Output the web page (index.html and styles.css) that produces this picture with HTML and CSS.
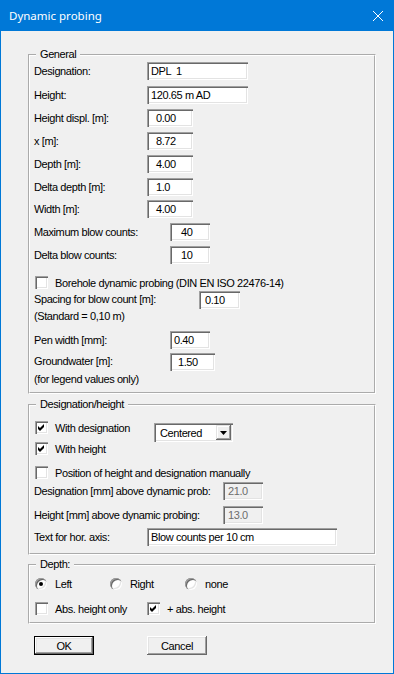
FILE: index.html
```html
<!DOCTYPE html>
<html lang="en">
<head>
  <meta charset="UTF-8" />
  <title>Dynamic probing</title>
  <link rel="stylesheet" href="styles.css">
</head>
<body>
  <div class="window">
    <div class="titlebar">
      <span class="title">Dynamic probing</span>
      <svg class="close" width="10" height="10" viewBox="0 0 10 10"><path d="M0 0 L10 10 M10 0 L0 10" stroke="#fff" stroke-width="1" fill="none"/></svg>
    </div>

    <div class="dialog">
      <div class="group general">
        <div class="caption">General</div>
        <div class="row"><span class="lbl l113">Designation:</span><span class="edit w101">DPL  1</span></div>
        <div class="row mt6"><span class="lbl l113">Height:</span><span class="edit w101">120.65 m AD</span></div>
        <div class="row"><span class="lbl l113">Height displ. [m]:</span><span class="edit w46 pl9">0.00</span></div>
        <div class="row"><span class="lbl l113">x [m]:</span><span class="edit w46 pl9">8.72</span></div>
        <div class="row"><span class="lbl l113">Depth [m]:</span><span class="edit w46 pl9">4.00</span></div>
        <div class="row"><span class="lbl l113">Delta depth [m]:</span><span class="edit w46 pl9">1.0</span></div>
        <div class="row mt4"><span class="lbl l113">Width [m]:</span><span class="edit w46 pl9">4.00</span></div>
        <div class="row"><span class="lbl l136">Maximum blow counts:</span><span class="edit w40 pl11">40</span></div>
        <div class="row"><span class="lbl l136">Delta blow counts:</span><span class="edit w40 pl11">10</span></div>
        <div class="check-row mt12"><span class="check"></span><span>Borehole dynamic probing (DIN EN ISO 22476-14)</span></div>
        <div class="row tall mt2"><span class="lbl l165 two">Spacing for blow count [m]:<br>(Standard = 0,10 m)</span><span class="edit w41 pl6">0.10</span></div>
        <div class="row mt6"><span class="lbl l136">Pen width [mm]:</span><span class="edit w40">0.40</span></div>
        <div class="row tall mt4"><span class="lbl l136 two gw">Groundwater [m]:<br>(for legend values only)</span><span class="edit w45 pl8">1.50</span></div>
      </div>

      <div class="group desig">
        <div class="caption">Designation/height</div>
        <div class="combo-row">
          <div class="checks">
            <div class="check-row"><span class="check"><svg width="13" height="13" viewBox="0 0 13 13"><path d="M3 5 L5 7 L9 3 L9 6 L5 10 L3 8 Z" fill="#000"/></svg></span><span>With designation</span></div>
            <div class="check-row mt8"><span class="check"><svg width="13" height="13" viewBox="0 0 13 13"><path d="M3 5 L5 7 L9 3 L9 6 L5 10 L3 8 Z" fill="#000"/></svg></span><span>With height</span></div>
          </div>
          <div class="combo">
            <span class="combo-text">Centered</span>
            <span class="combo-btn"><svg width="7" height="4" viewBox="0 0 7 4"><path d="M0 0 L7 0 L3.5 4 Z" fill="#000"/></svg></span>
          </div>
        </div>
        <div class="check-row mt11"><span class="check"></span><span>Position of height and designation manually</span></div>
        <div class="row mt3"><span class="lbl l189">Designation [mm] above dynamic prob:</span><span class="edit w40 pl5 disabled">21.0</span></div>
        <div class="row mt6"><span class="lbl l189">Height [mm] above dynamic probing:</span><span class="edit w40 pl5 disabled">13.0</span></div>
        <div class="row mt4"><span class="lbl l113">Text for hor. axis:</span><span class="edit w190">Blow counts per 10 cm</span></div>
      </div>

      <div class="group depth">
        <div class="caption">Depth:</div>
        <div class="opt-row mt5">
          <div class="opt w75"><span class="radio on"></span><span>Left</span></div>
          <div class="opt w75"><span class="radio"></span><span>Right</span></div>
          <div class="opt"><span class="radio"></span><span>none</span></div>
        </div>
        <div class="opt-row mt12">
          <div class="opt w112"><span class="check"></span><span>Abs. height only</span></div>
          <div class="opt"><span class="check"><svg width="13" height="13" viewBox="0 0 13 13"><path d="M3 5 L5 7 L9 3 L9 6 L5 10 L3 8 Z" fill="#000"/></svg></span><span>+ abs. height</span></div>
        </div>
      </div>

      <div class="buttons">
        <div class="btn default">OK</div>
        <div class="btn">Cancel</div>
      </div>
    </div>
  </div>
</body>
</html>
```

FILE: styles.css
```css
body {
  margin: 0;
  background: #f0f0f0;
  font-family: "Liberation Sans", Arial, sans-serif;
  font-size: 11px;
  letter-spacing: -0.4px;
  color: #000;
}

.window {
  width: 394px;
  height: 674px;
  box-sizing: border-box;
  border: 1px solid #0078d7;
  border-top: 0;
}

.titlebar {
  height: 31px;
  background: #0078d7;
  color: #fff;
  display: flex;
  align-items: center;
  justify-content: space-between;
  padding: 0 10px 0 8px;
  font-family: "Noto Sans", sans-serif;
  font-size: 11.5px;
  letter-spacing: 0;
}

.close {
  display: block;
}

.dialog {
  padding-top: 23px;
  white-space: nowrap;
}

/* etched group box */
.group {
  margin: 0 17px 0 27px;
  border: 2px groove #fff;
  padding: 0 4px 4px 4px;
}

.caption {
  width: fit-content;
  margin: -9px 0 0 2px;
  padding: 0 4px;
  background: #f0f0f0;
  line-height: 15px;
}

.desig {
  margin-top: 10px;
  padding-bottom: 7px;
}

.depth {
  margin-top: 9px;
  padding-bottom: 7px;
}

.row {
  display: flex;
  align-items: center;
  height: 18px;
  margin-top: 5px;
}

.caption + .row {
  margin-top: 0;
}

.row.tall {
  height: auto;
  align-items: flex-start;
}

.lbl {
  flex: none;
}

.l113 { width: 113px; }
.l136 { width: 136px; }
.l165 { width: 165px; }
.l189 { width: 189px; }

.two {
  line-height: 17px;
}

.two.gw {
  line-height: 18px;
  margin-top: -1px;
}

.edit {
  flex: none;
  height: 18px;
  line-height: 18px;
  box-sizing: border-box;
  padding-left: 4px;
  background: #fff;
  white-space: pre;
  box-shadow: inset 1px 1px 0 #a0a0a0, inset 2px 2px 0 #696969, inset -1px -1px 0 #fff, inset -2px -2px 0 #e3e3e3;
}

.edit.disabled {
  background: #f0f0f0;
  color: #6d6d6d;
}

.w40 { width: 40px; }
.w41 { width: 41px; }
.w45 { width: 45px; }
.w46 { width: 46px; }
.w101 { width: 101px; }
.w190 { width: 190px; }

.pl5 { padding-left: 5px; }
.pl6 { padding-left: 6px; }
.pl8 { padding-left: 8px; }
.pl9 { padding-left: 9px; }
.pl11 { padding-left: 11px; }

.check-row,
.opt-row,
.opt {
  display: flex;
  align-items: center;
  height: 13px;
}

.check {
  flex: none;
  width: 13px;
  height: 13px;
  margin: 0 7px 0 1px;
  background: #fff;
  box-shadow: inset 1px 1px 0 #a0a0a0, inset 2px 2px 0 #696969, inset -1px -1px 0 #fff, inset -2px -2px 0 #e3e3e3;
}

.check svg {
  display: block;
}

.radio {
  flex: none;
  width: 12px;
  height: 12px;
  margin: 0 8px 0 1px;
  border-radius: 50%;
  background: #fff;
  box-shadow: inset 1px 1px 0 #a0a0a0, inset 2px 2px 0 #696969, inset -1px -1px 0 #fff, inset -2px -2px 0 #e3e3e3;
  display: flex;
  align-items: center;
  justify-content: center;
}

.radio.on::after {
  content: "";
  width: 4px;
  height: 4px;
  border-radius: 50%;
  background: #000;
}

.w75 { width: 75px; }
.w112 { width: 112px; }

.combo-row {
  display: flex;
  align-items: flex-start;
  margin-top: 9px;
}

.checks {
  width: 120px;
}

.combo {
  width: 79px;
  height: 19px;
  margin-top: 2px;
  box-sizing: border-box;
  padding: 2px;
  background: #fff;
  box-shadow: inset 1px 1px 0 #a0a0a0, inset 2px 2px 0 #696969, inset -1px -1px 0 #fff, inset -2px -2px 0 #e3e3e3;
  display: flex;
  align-items: center;
  justify-content: space-between;
}

.combo-text {
  padding-left: 4px;
}

.combo-btn {
  width: 15px;
  height: 15px;
  background: #f0f0f0;
  box-shadow: inset -1px -1px 0 #696969, inset 1px 1px 0 #e3e3e3, inset -2px -2px 0 #a0a0a0, inset 2px 2px 0 #fff;
  display: flex;
  align-items: center;
  justify-content: center;
}

.combo-btn svg {
  display: block;
}

.mt2 { margin-top: 2px; }
.mt3 { margin-top: 3px; }
.mt4 { margin-top: 4px; }
.mt5 { margin-top: 5px; }
.mt6 { margin-top: 6px; }
.mt8 { margin-top: 8px; }
.mt11 { margin-top: 11px; }
.mt12 { margin-top: 12px; }

.buttons {
  display: flex;
  gap: 53px;
  margin: 12px 0 0 33px;
}

.btn {
  width: 60px;
  height: 19px;
  box-sizing: border-box;
  display: flex;
  align-items: center;
  justify-content: center;
  box-shadow: inset -1px -1px 0 #696969, inset 1px 1px 0 #fff, inset -2px -2px 0 #a0a0a0, inset 2px 2px 0 #e3e3e3;
}

.btn.default {
  border: 1px solid #000;
}
```
